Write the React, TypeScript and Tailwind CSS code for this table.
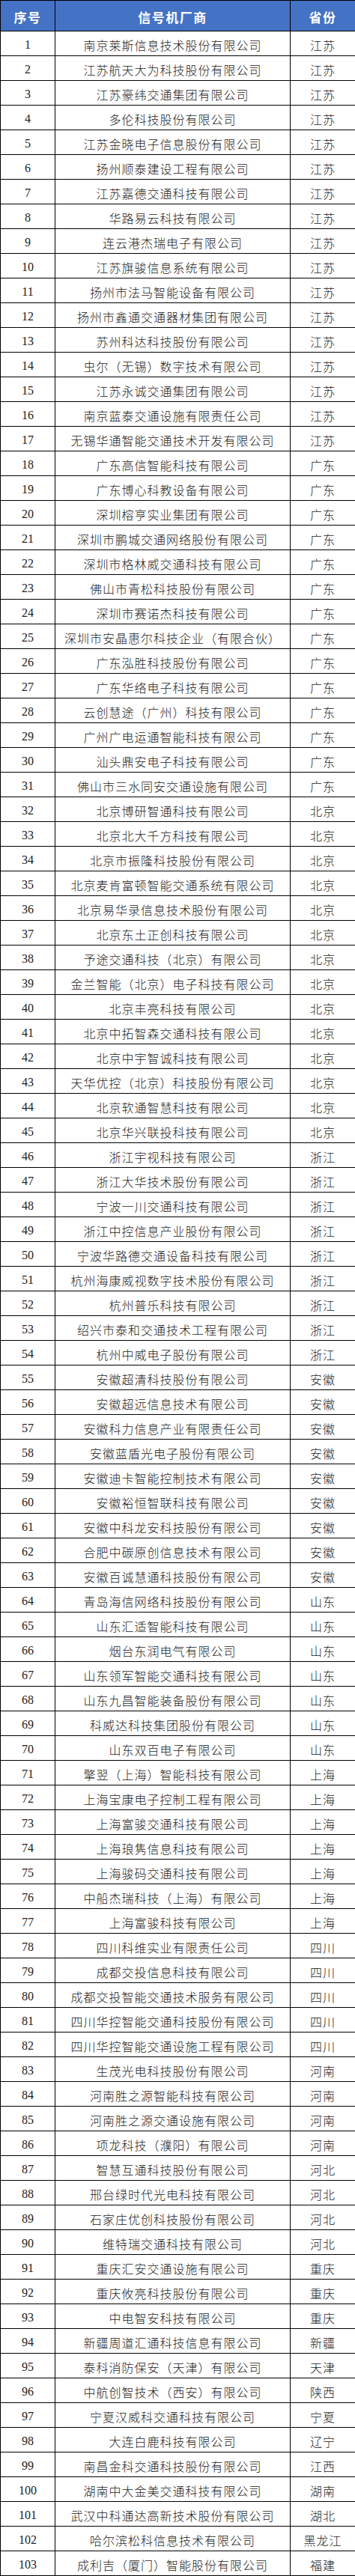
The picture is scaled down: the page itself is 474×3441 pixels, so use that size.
const rows: [string, string][] = [
  ["南京莱斯信息技术股份有限公司", "江苏"],
  ["江苏航天大为科技股份有限公司", "江苏"],
  ["江苏豪纬交通集团有限公司", "江苏"],
  ["多伦科技股份有限公司", "江苏"],
  ["江苏金晓电子信息股份有限公司", "江苏"],
  ["扬州顺泰建设工程有限公司", "江苏"],
  ["江苏嘉德交通科技有限公司", "江苏"],
  ["华路易云科技有限公司", "江苏"],
  ["连云港杰瑞电子有限公司", "江苏"],
  ["江苏旗骏信息系统有限公司", "江苏"],
  ["扬州市法马智能设备有限公司", "江苏"],
  ["扬州市鑫通交通器材集团有限公司", "江苏"],
  ["苏州科达科技股份有限公司", "江苏"],
  ["虫尔（无锡）数字技术有限公司", "江苏"],
  ["江苏永诚交通集团有限公司", "江苏"],
  ["南京蓝泰交通设施有限责任公司", "江苏"],
  ["无锡华通智能交通技术开发有限公司", "江苏"],
  ["广东高信智能科技有限公司", "广东"],
  ["广东博心科教设备有限公司", "广东"],
  ["深圳榕亨实业集团有限公司", "广东"],
  ["深圳市鹏城交通网络股份有限公司", "广东"],
  ["深圳市格林威交通科技有限公司", "广东"],
  ["佛山市青松科技股份有限公司", "广东"],
  ["深圳市赛诺杰科技有限公司", "广东"],
  ["深圳市安晶惠尔科技企业（有限合伙）", "广东"],
  ["广东泓胜科技股份有限公司", "广东"],
  ["广东华络电子科技有限公司", "广东"],
  ["云创慧途（广州）科技有限公司", "广东"],
  ["广州广电运通智能科技有限公司", "广东"],
  ["汕头鼎安电子科技有限公司", "广东"],
  ["佛山市三水同安交通设施有限公司", "广东"],
  ["北京博研智通科技有限公司", "北京"],
  ["北京北大千方科技有限公司", "北京"],
  ["北京市振隆科技股份有限公司", "北京"],
  ["北京麦肯富顿智能交通系统有限公司", "北京"],
  ["北京易华录信息技术股份有限公司", "北京"],
  ["北京东土正创科技有限公司", "北京"],
  ["予途交通科技（北京）有限公司", "北京"],
  ["金兰智能（北京）电子科技有限公司", "北京"],
  ["北京丰亮科技有限公司", "北京"],
  ["北京中拓智森交通科技有限公司", "北京"],
  ["北京中宇智诚科技有限公司", "北京"],
  ["天华优控（北京）科技股份有限公司", "北京"],
  ["北京软通智慧科技有限公司", "北京"],
  ["北京华兴联投科技有限公司", "北京"],
  ["浙江宇视科技有限公司", "浙江"],
  ["浙江大华技术股份有限公司", "浙江"],
  ["宁波一川交通科技有限公司", "浙江"],
  ["浙江中控信息产业股份有限公司", "浙江"],
  ["宁波华路德交通设备科技有限公司", "浙江"],
  ["杭州海康威视数字技术股份有限公司", "浙江"],
  ["杭州普乐科技有限公司", "浙江"],
  ["绍兴市泰和交通技术工程有限公司", "浙江"],
  ["杭州中威电子股份有限公司", "浙江"],
  ["安徽超清科技股份有限公司", "安徽"],
  ["安徽超远信息技术有限公司", "安徽"],
  ["安徽科力信息产业有限责任公司", "安徽"],
  ["安徽蓝盾光电子股份有限公司", "安徽"],
  ["安徽迪卡智能控制技术有限公司", "安徽"],
  ["安徽裕恒智联科技有限公司", "安徽"],
  ["安徽中科龙安科技股份有限公司", "安徽"],
  ["合肥中碳原创信息技术有限公司", "安徽"],
  ["安徽百诚慧通科技股份有限公司", "安徽"],
  ["青岛海信网络科技股份有限公司", "山东"],
  ["山东汇适智能科技有限公司", "山东"],
  ["烟台东润电气有限公司", "山东"],
  ["山东领军智能交通科技有限公司", "山东"],
  ["山东九昌智能装备股份有限公司", "山东"],
  ["科威达科技集团股份有限公司", "山东"],
  ["山东双百电子有限公司", "山东"],
  ["擎翌（上海）智能科技有限公司", "上海"],
  ["上海宝康电子控制工程有限公司", "上海"],
  ["上海富骏交通科技有限公司", "上海"],
  ["上海琅隽信息科技有限公司", "上海"],
  ["上海骏码交通科技有限公司", "上海"],
  ["中船杰瑞科技（上海）有限公司", "上海"],
  ["上海富骏科技有限公司", "上海"],
  ["四川科维实业有限责任公司", "四川"],
  ["成都交投信息科技有限公司", "四川"],
  ["成都交投智能交通技术服务有限公司", "四川"],
  ["四川华控智能交通科技股份有限公司", "四川"],
  ["四川华控智能交通设施工程有限公司", "四川"],
  ["生茂光电科技股份有限公司", "河南"],
  ["河南胜之源智能科技有限公司", "河南"],
  ["河南胜之源交通设施有限公司", "河南"],
  ["项龙科技（濮阳）有限公司", "河南"],
  ["智慧互通科技股份有限公司", "河北"],
  ["邢台绿时代光电科技有限公司", "河北"],
  ["石家庄优创科技股份有限公司", "河北"],
  ["维特瑞交通科技有限公司", "河北"],
  ["重庆汇安交通设施有限公司", "重庆"],
  ["重庆攸亮科技股份有限公司", "重庆"],
  ["中电智安科技有限公司", "重庆"],
  ["新疆周道汇通科技信息有限公司", "新疆"],
  ["泰科消防保安（天津）有限公司", "天津"],
  ["中航创智技术（西安）有限公司", "陕西"],
  ["宁夏汉威科交通科技有限公司", "宁夏"],
  ["大连白鹿科技有限公司", "辽宁"],
  ["南昌金科交通科技股份有限公司", "江西"],
  ["湖南中大金美交通科技有限公司", "湖南"],
  ["武汉中科通达高新技术股份有限公司", "湖北"],
  ["哈尔滨松科信息技术有限公司", "黑龙江"],
  ["成利吉（厦门）智能股份有限公司", "福建"],
];

const cjk = "font-['Noto_Sans_CJK_SC','Noto_Sans',sans-serif]";

export default function App() {
  return (
    <div className="w-[474px] bg-white">
      <table className="w-[474px] table-fixed border-collapse">
        <colgroup>
          <col className="w-[73px]" />
          <col className="w-[314px]" />
          <col className="w-[87px]" />
        </colgroup>
        <thead>
          <tr className="h-[41px] bg-[#4472c4] text-white">
            <th className={`border border-black pt-1 text-center text-[17px] font-bold tracking-[1.5px] ${cjk}`}>序号</th>
            <th className={`border border-black pt-1 text-center text-[17px] font-bold tracking-[1.5px] ${cjk}`}>信号机厂商</th>
            <th className={`border border-black pt-1 text-center text-[17px] font-bold tracking-[1.5px] ${cjk}`}>省份</th>
          </tr>
        </thead>
        <tbody>
          {rows.map(([name, prov], i) => (
            <tr key={i} className="h-[33px] text-[#222]">
              <td className="border border-black pt-[3px] text-center font-['Liberation_Serif',serif] text-[16px] leading-none">
                {i + 1}
              </td>
              <td className={`border border-black pt-[3px] text-center text-[16px] font-light leading-none tracking-[1px] whitespace-nowrap ${cjk}`}>
                {name}
              </td>
              <td className={`border border-black pt-[3px] text-center text-[16px] font-light leading-none tracking-[1px] whitespace-nowrap ${cjk}`}>
                {prov}
              </td>
            </tr>
          ))}
        </tbody>
      </table>
    </div>
  );
}
